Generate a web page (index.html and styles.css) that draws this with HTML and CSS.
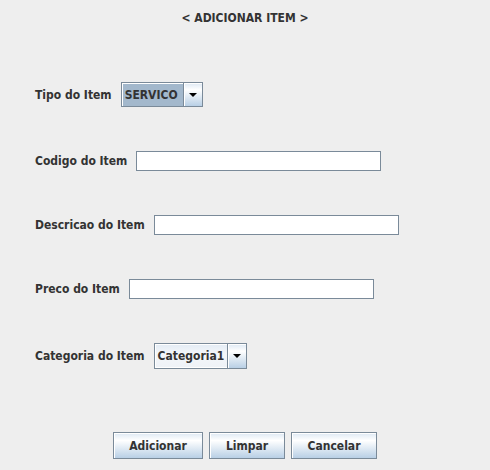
FILE: index.html
```html
<!DOCTYPE html>
<html>
<head>
<meta charset="utf-8">
<link rel="stylesheet" href="styles.css">
</head>
<body>
<div class="window">
  <div class="title">&lt; ADICIONAR ITEM &gt;</div>
  <div class="form">
    <div class="row row-combo1">
      <span class="label">Tipo do Item</span>
      <div class="combo combo-selected">
        <span class="combo-value">SERVICO</span>
        <span class="combo-arrow"><span class="tri"></span></span>
      </div>
    </div>
    <div class="row row-field">
      <span class="label">Codigo do Item</span>
      <div class="field"></div>
    </div>
    <div class="row row-field">
      <span class="label">Descricao do Item</span>
      <div class="field"></div>
    </div>
    <div class="row row-field">
      <span class="label">Preco do Item</span>
      <div class="field"></div>
    </div>
    <div class="row row-combo2">
      <span class="label">Categoria do Item</span>
      <div class="combo combo-plain">
        <span class="combo-value">Categoria1</span>
        <span class="combo-arrow"><span class="tri"></span></span>
      </div>
    </div>
  </div>
  <div class="buttons">
    <button class="btn btn-add">Adicionar</button>
    <button class="btn btn-clear">Limpar</button>
    <button class="btn btn-cancel">Cancelar</button>
  </div>
</div>
</body>
</html>
```
FILE: styles.css
```css
html, body {
  margin: 0;
  padding: 0;
  background: #eeeeee;
}
body {
  font-family: "DejaVu Sans Condensed", "DejaVu Sans", sans-serif;
  font-stretch: condensed;
  font-weight: bold;
  font-size: 12px;
  color: #333333;
  width: 490px;
  height: 470px;
  overflow: hidden;
}
.window {
  display: flex;
  flex-direction: column;
}
.title {
  height: 36px;
  line-height: 36px;
  text-align: center;
}
.form {
  display: flex;
  flex-direction: column;
  gap: 44px;
  margin-top: 46px;
  padding-left: 35px;
}
.row {
  display: flex;
  align-items: center;
  gap: 9px;
}
.label {
  white-space: nowrap;
}
.field {
  box-sizing: border-box;
  width: 245px;
  height: 20px;
  background: #ffffff;
  border: 1px solid #7a8a99;
  box-shadow: inset -1px -1px 0 #ffffff, inset 1px 1px 0 #ffffff;
}
.combo {
  box-sizing: border-box;
  display: flex;
  border: 1px solid #7a8a99;
  height: 25px;
}
.combo-value {
  display: flex;
  align-items: center;
  padding: 0 3px;
  border: 1px solid #ffffff;
  border-right: none;
}
.combo-selected .combo-value {
  width: 55px;
  background: #a3b8cc;
  border: none;
  box-shadow: inset 1px 1px 0 #ffffff;
  padding-left: 3px;
}
.combo-plain {
  height: 26px;
}
.combo-plain .combo-value {
  width: 66px;
  background: linear-gradient(#e4ecf5, #f4f7fa 40%, #eef2f7);
  padding-left: 2px;
}
.combo-arrow {
  box-sizing: border-box;
  width: 19px;
  display: flex;
  align-items: center;
  justify-content: center;
  border-left: 1px solid #7a8a99;
  background: linear-gradient(#dde8f3 0%, #ffffff 30%, #b8cfe5 100%);
  box-shadow: inset 1px 1px 0 #ffffff;
}
.tri {
  width: 0;
  height: 0;
  border-left: 4px solid transparent;
  border-right: 4px solid transparent;
  border-top: 4px solid #000000;
}
.buttons {
  display: flex;
  justify-content: center;
  gap: 6px;
  margin-top: 63px;
  padding-left: 0;
}
.btn {
  box-sizing: border-box;
  height: 27px;
  font: inherit;
  font-stretch: condensed;
  color: #333333;
  border: 1px solid #7a8a99;
  background: linear-gradient(#dde8f3 0%, #ffffff 30%, #b8cfe5 100%);
  box-shadow: inset 1px 1px 0 #ffffff;
  padding: 0;
  border-radius: 0;
}
.btn-add { width: 90px; }
.btn-clear { width: 76px; }
.btn-cancel { width: 86px; }
```
